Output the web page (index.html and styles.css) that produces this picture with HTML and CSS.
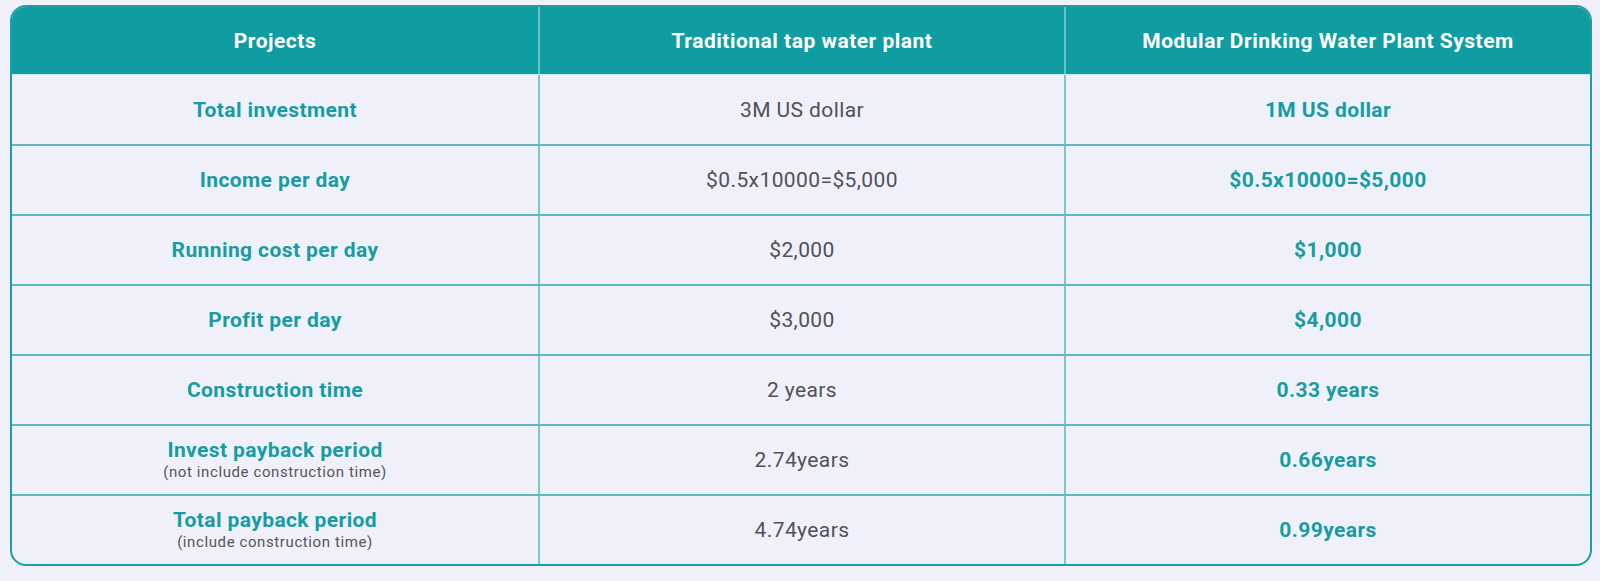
FILE: index.html
```html
<!DOCTYPE html>
<html lang="en">
<head>
<meta charset="utf-8">
<title>Comparison</title>
<link rel="stylesheet" href="styles.css">
</head>
<body>
<div class="table">
  <div class="row head">
    <div class="cell">Projects</div>
    <div class="cell">Traditional tap water plant</div>
    <div class="cell">Modular Drinking Water Plant System</div>
  </div>
  <div class="row">
    <div class="cell label">Total investment</div>
    <div class="cell plain">3M US dollar</div>
    <div class="cell accent">1M US dollar</div>
  </div>
  <div class="row">
    <div class="cell label">Income per day</div>
    <div class="cell plain">$0.5x10000=$5,000</div>
    <div class="cell accent">$0.5x10000=$5,000</div>
  </div>
  <div class="row">
    <div class="cell label">Running cost per day</div>
    <div class="cell plain">$2,000</div>
    <div class="cell accent">$1,000</div>
  </div>
  <div class="row">
    <div class="cell label">Profit per day</div>
    <div class="cell plain">$3,000</div>
    <div class="cell accent">$4,000</div>
  </div>
  <div class="row">
    <div class="cell label">Construction time</div>
    <div class="cell plain">2 years</div>
    <div class="cell accent">0.33 years</div>
  </div>
  <div class="row">
    <div class="cell label">Invest payback period<span class="note">(not include construction time)</span></div>
    <div class="cell plain">2.74years</div>
    <div class="cell accent">0.66years</div>
  </div>
  <div class="row">
    <div class="cell label">Total payback period<span class="note">(include construction time)</span></div>
    <div class="cell plain">4.74years</div>
    <div class="cell accent">0.99years</div>
  </div>
</div>
</body>
</html>
```

FILE: styles.css
```css
html, body {
  margin: 0;
  background: #f0f0fb;
}
body {
  padding: 5px 8px 0 10px;
  font-family: Roboto, "Liberation Sans", sans-serif;
}
.table {
  border: 2px solid #1b9ea4;
  border-radius: 16px;
  overflow: hidden;
  display: flex;
  flex-direction: column;
}
.row {
  display: grid;
  grid-template-columns: 1fr 1fr 1fr;
  height: 68px;
  border-top: 2px solid #5cb9be;
}
.row.head {
  height: 67px;
  border-top: none;
  background: #109da2;
  border-bottom: 1px solid #c9e6ee;
}
.row.head + .row {
  border-top: none;
  height: 69px;
}
.cell {
  display: flex;
  flex-direction: column;
  align-items: center;
  justify-content: center;
  text-align: center;
  font-size: 21px;
  line-height: 24px;
  letter-spacing: 0.4px;
}
.cell + .cell {
  border-left: 2px solid #7fc7cc;
}
.head .cell {
  color: #ffffff;
  font-weight: 700;
  font-size: 21px;
  letter-spacing: 0.5px;
}
.head .cell + .cell {
  border-left: 2px solid #6cc0c4;
}
.label, .accent {
  color: #169ca2;
  font-weight: 700;
}
.plain {
  color: #505058;
  font-weight: 400;
}
.note {
  color: #55555c;
  font-weight: 400;
  font-size: 15px;
  line-height: 20px;
  letter-spacing: 0.6px;
}
```
